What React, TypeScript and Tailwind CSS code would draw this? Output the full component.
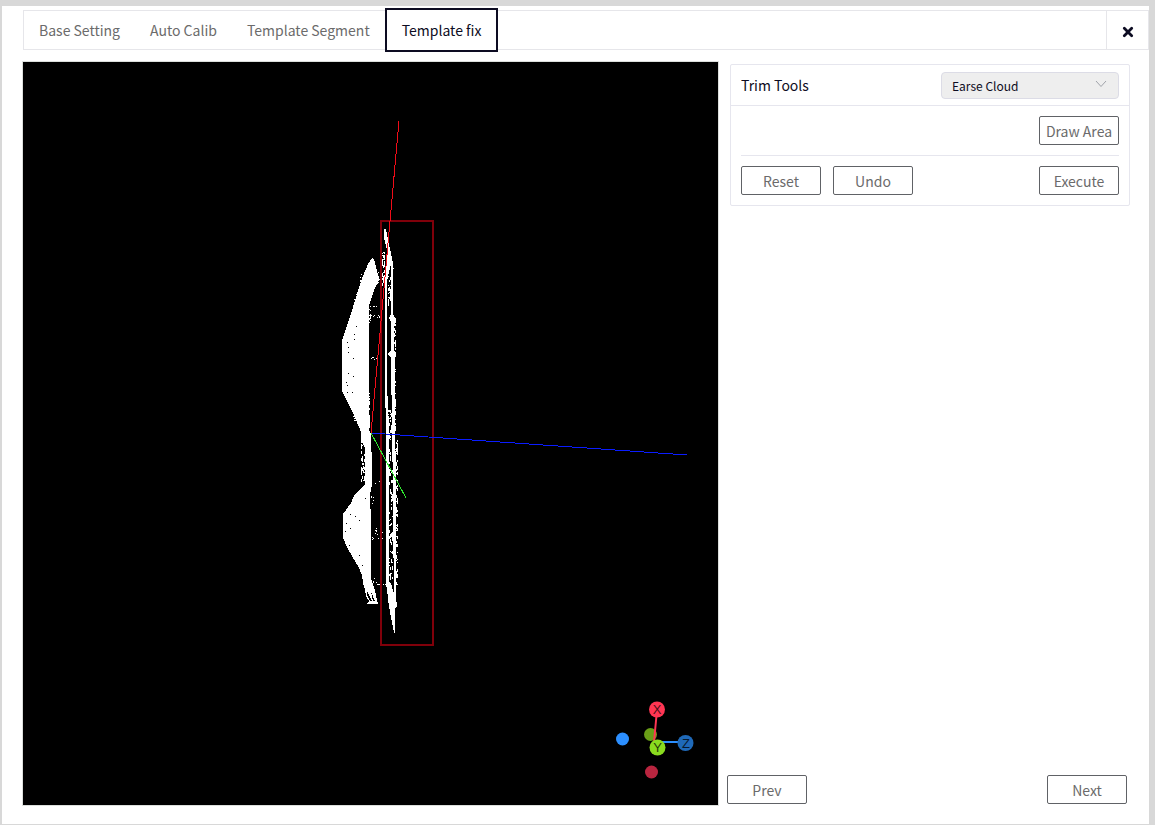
import { useState } from 'react';
import type { ReactNode } from 'react';

const TABS = ['Base Setting', 'Auto Calib', 'Template Segment', 'Template fix'];

// Bands of stray scan points: x, y, width, height, number of points
const BANDS = [
  [369, 306, 2, 18, 14],
  [370, 315, 10, 3, 8],
  [371, 306, 6, 1, 3],
  [369, 357, 8, 3, 8],
  [369, 390, 1, 40, 16],
  [360, 274, 3, 14, 14],
  [354, 294, 3, 14, 8],
  [353, 415, 3, 6, 6],
  [361, 438, 4, 45, 36],
  [382, 252, 3, 34, 40],
  [378, 272, 6, 12, 18],
  [388, 276, 3, 28, 26],
  [393, 268, 2, 2, 2],
  [392, 316, 4, 30, 36],
  [394, 340, 2, 95, 60],
  [388, 410, 5, 26, 26],
  [389, 436, 2, 40, 16],
  [388, 470, 5, 110, 70],
  [395, 440, 3, 145, 110],
  [374, 478, 8, 6, 7],
  [374, 528, 9, 12, 10],
  [372, 536, 2, 6, 5],
  [373, 578, 4, 6, 6],
  [377, 583, 9, 2, 8],
  [371, 494, 3, 10, 6],
];

const HOLES = [
  [356, 326], [354, 334], [354, 339], [347, 342], [348, 347], [348, 352],
  [353, 358], [348, 373], [353, 376], [346, 382], [352, 392], [347, 385],
  [347, 392], [350, 409], [365, 498], [350, 514], [355, 516], [359, 520],
  [346, 523], [350, 528], [345, 531], [349, 545], [359, 555], [362, 565],
];

function scatter() {
  let seed = 7;
  const next = () => {
    seed = (seed * 16807) % 2147483647;
    return seed / 2147483647;
  };
  return BANDS.map(([x, y, w, h, count]) => {
    let d = '';
    for (let i = 0; i < count; i++) {
      const len = h > 20 ? 1 + Math.floor(next() * 3) : 1;
      d += `M${x + Math.floor(next() * w)} ${y + Math.floor(next() * h)}h1v${len}h-1z`;
    }
    return d;
  }).join('');
}

const NOISE = scatter();
const HOLE_PATH = HOLES.map(([x, y]) => `M${x} ${y}h1v1h-1z`).join('');

function PointCloud() {
  return (
    <svg viewBox="23 62 695 743" className="block w-full h-full" role="img" aria-label="Point cloud">
      <g shapeRendering="crispEdges">
        <g fill="#fff">
          {/* left shell */}
          <path d="M372 258L374 259L376 267L379 278L378 283L375 288L371 299L369 306V430L371 434V450L372 454V485L370 495V505L371 512V578L373 584L375 591L378 604H367L369 601L366 596L365 590L363 583L362 575L358 566L352 556L347 547L343 538V514L351 503L354 496L360 489L365 484V448L361 440V432L356 420L352 411L347 401L342 391V340L348 323L353 307L357 294L361 281L368 264Z" />
          {/* right shell */}
          <path d="M384 229H386L388 240L392 258L393 264V314L394 320V345L395 360V430L396 470V598L397 606L395 609V633H394L390 612L388 600L387 588L386 587V430L385 385V275L387 250L384 238Z" />
          <circle cx="391" cy="317" r="3" />
          <circle cx="391" cy="354" r="3" />
          <circle cx="393" cy="497" r="3" />
          <circle cx="393" cy="535" r="3" />
        </g>
        <g fill="#000">
          <path d="M388 276L391 264V314L389 318L391 322V350L388 354L391 358L392 430L393 493L391 497L393 501V531L390 535L393 539L394 575V594L391 583L389 582V430L387 385V282Z" />
          <path d="M367 591L372 601H370L367 595ZM371 592L375 601H373Z" />
          <path d={HOLE_PATH} />
        </g>
        <path d={NOISE} fill="#fff" />
        <rect x="381" y="221" width="52" height="424" fill="none" stroke="#80000a" strokeWidth="2" />
        <path d="M371 433L399 121" stroke="#f00c18" />
        <path d="M371 433L687 455" stroke="#0a1cff" />
        <path d="M371 433L406 498" stroke="#2fe82f" />
      </g>

      {/* view gizmo */}
      <circle cx="650.5" cy="734.5" r="6.5" fill="#6a9e17" />
      <path d="M657 742H686" stroke="#2c8fff" strokeWidth="2" />
      <path d="M657 710L654 742" stroke="#ff3653" strokeWidth="2" />
      <circle cx="622.5" cy="739" r="6.5" fill="#2c8fff" />
      <circle cx="651.5" cy="772" r="6.5" fill="#b9253f" />
      <circle cx="657" cy="709.5" r="8" fill="#ff3653" />
      <circle cx="685.5" cy="743" r="8" fill="#1f69b8" />
      <circle cx="657.5" cy="747.5" r="8" fill="#8adb1f" />
      <g className="font-['Liberation_Sans',sans-serif] text-[13px]" textAnchor="middle" fillOpacity="0.75">
        <text x="657" y="714">X</text>
        <text x="686" y="748">Z</text>
        <text x="657.5" y="752">Y</text>
      </g>
    </svg>
  );
}

function ToolButton({ children }: { children: ReactNode }) {
  return (
    <button className="w-20 h-[29px] pt-px border border-[#606266] rounded-xs bg-white text-[#6b6b6b] text-sm leading-[26px] text-center whitespace-nowrap">
      {children}
    </button>
  );
}

export default function App() {
  const [active, setActive] = useState('Template fix');
  const [tool, setTool] = useState('Earse Cloud');

  return (
    <div className="min-h-screen flex flex-col bg-[#d8d8d8] pt-[6px] pl-[2px] pr-[6px] pb-px font-['Noto_Sans_CJK_SC',sans-serif]">
      <div className="flex-1 flex flex-col bg-white pt-1 pb-[18px]">
        <nav className="h-10 ml-[21px] flex items-center border border-[#e6e6ea]">
          {TABS.map((tab) => (
            <button
              key={tab}
              onClick={() => setActive(tab)}
              className={
                tab === active
                  ? 'h-11 px-[15px] border-2 border-[#0d0c22] bg-white text-[#0d0c22] text-sm shrink-0'
                  : 'h-10 px-[15px] text-[#6b6b6b] text-sm shrink-0'
              }
            >
              {tab}
            </button>
          ))}
          <button aria-label="Close" className="ml-auto w-[42px] h-[38px] border-l border-[#e6e6ea] flex items-center justify-center">
            <svg width="12" height="12" viewBox="0 0 12 12" className="mt-1">
              <path d="M2.3 2.3L9.7 9.7M9.7 2.3L2.3 9.7" stroke="#0d0c22" strokeWidth="2.8" strokeLinecap="round" />
            </svg>
          </button>
        </nav>

        <main className="flex-1 flex gap-2 mt-[11px] ml-5 mr-[19px]">
          <section className="flex-1 border border-[#dcdfdc] bg-black">
            <PointCloud />
          </section>

          <aside className="w-[403px] flex flex-col justify-between pt-[3px]">
            <div className="ml-[3px] border border-[#e6e6ee] rounded-xs">
              <div className="h-[41px] px-[10px] flex items-center justify-between border-b border-[#e6e6ee]">
                <label htmlFor="trim-tool" className="text-sm text-[#0d0c22]">Trim Tools</label>
                <div className="relative">
                  <select
                    id="trim-tool"
                    value={tool}
                    onChange={(e) => setTool(e.target.value)}
                    className="appearance-none block w-[178px] h-[27px] pt-px pl-[10px] pr-8 border border-[#dcdce6] rounded bg-[#eeeeee] text-xs text-[#0d0c22]"
                  >
                    <option>Earse Cloud</option>
                    <option>Keep Cloud</option>
                  </select>
                  <svg width="12" height="8" viewBox="0 0 12 8" className="absolute right-3 top-2 pointer-events-none">
                    <path d="M1 1L6 6.5L11 1" fill="none" stroke="#a0a3aa" />
                  </svg>
                </div>
              </div>
              <div className="px-[10px]">
                <div className="py-[10px] flex justify-end border-b border-[#e6e6ee]">
                  <ToolButton>Draw Area</ToolButton>
                </div>
                <div className="py-[10px] flex gap-3">
                  <ToolButton>Reset</ToolButton>
                  <ToolButton>Undo</ToolButton>
                  <div className="ml-auto">
                    <ToolButton>Execute</ToolButton>
                  </div>
                </div>
              </div>
            </div>

            <div className="mr-[3px] mb-[2px] flex justify-between">
              <ToolButton>Prev</ToolButton>
              <ToolButton>Next</ToolButton>
            </div>
          </aside>
        </main>
      </div>
    </div>
  );
}
